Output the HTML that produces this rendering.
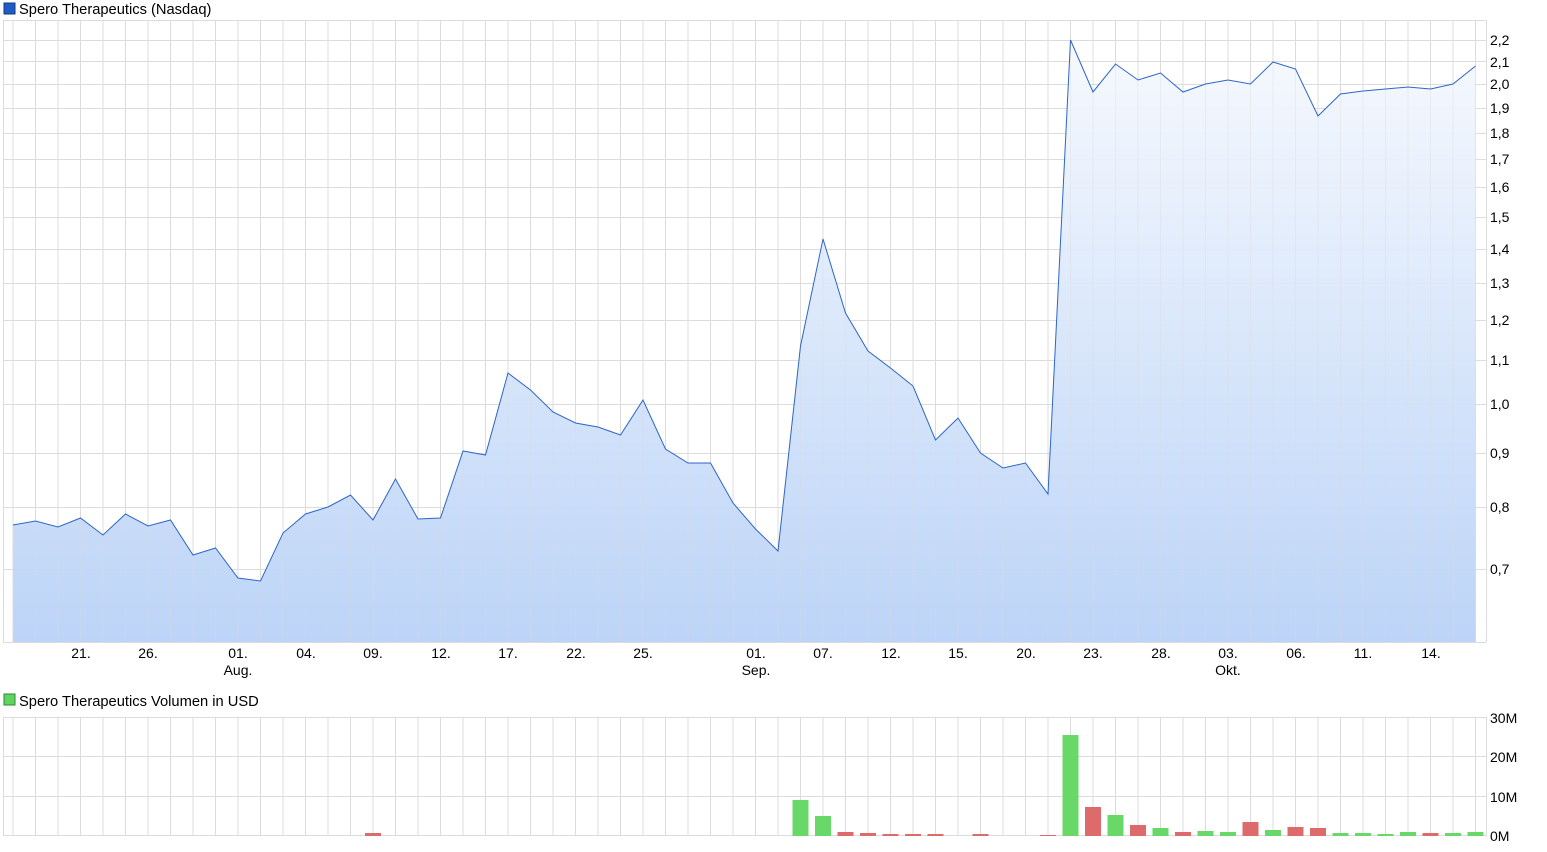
<!DOCTYPE html>
<html><head><meta charset="utf-8"><style>
body{margin:0;background:#fff;width:1547px;height:852px;overflow:hidden;font-family:"Liberation Sans",sans-serif}
svg{display:block}
text{font-family:"Liberation Sans",sans-serif;font-size:14px;fill:#000}
text.lg{font-size:14.7px}
</style></head><body>
<svg width="1547" height="852" viewBox="0 0 1547 852">
<defs>
<pattern id="vg" patternUnits="userSpaceOnUse" x="12.5" y="0" width="22.5" height="852"><rect x="0" y="0" width="1" height="852" fill="#dcdcdc"/></pattern>
<linearGradient id="fg" x1="0" y1="0" x2="0" y2="1"><stop offset="0" stop-color="#f6f9fe"/><stop offset="1" stop-color="#b9d2f7"/></linearGradient>
</defs>
<rect x="3" y="20" width="1483" height="622" fill="url(#vg)"/>
<g fill="#dcdcdc">
<rect x="3" y="20" width="1483" height="1"/><rect x="3" y="40" width="1483" height="1"/><rect x="3" y="61" width="1483" height="1"/><rect x="3" y="84" width="1483" height="1"/><rect x="3" y="108" width="1483" height="1"/><rect x="3" y="133" width="1483" height="1"/><rect x="3" y="159" width="1483" height="1"/><rect x="3" y="187" width="1483" height="1"/><rect x="3" y="217" width="1483" height="1"/><rect x="3" y="249" width="1483" height="1"/><rect x="3" y="283" width="1483" height="1"/><rect x="3" y="320" width="1483" height="1"/><rect x="3" y="360" width="1483" height="1"/><rect x="3" y="404" width="1483" height="1"/><rect x="3" y="453" width="1483" height="1"/><rect x="3" y="507" width="1483" height="1"/><rect x="3" y="569" width="1483" height="1"/><rect x="3" y="642" width="1483" height="1"/>
<rect x="3" y="20" width="1" height="622"/><rect x="1486" y="20" width="1" height="622"/>
</g>
<polygon fill="url(#fg)" fill-opacity="0.95" points="13,642 13,525 35.5,521 58,527 80.5,518 103,535 125.5,514 148,526 170.5,520 193,555 215.5,548 238,578 260.5,581 283,533 305.5,514 328,507 350.5,495 373,520 395.5,479 418,519 440.5,518 463,451 485.5,455 508,373 530.5,390 553,412 575.5,423 598,427 620.5,435 643,400 665.5,449 688,463 710.5,463 733,503 755.5,529 778,551 800.5,346 823,239 845.5,313 868,351 890.5,368 913,386 935.5,440 958,418 980.5,453 1003,468 1025.5,463 1048,494 1070.5,40 1093,92 1115.5,64 1138,80 1160.5,73 1183,92 1205.5,84 1228,80 1250.5,84 1273,62 1295.5,69 1318,116 1340.5,94 1363,91 1385.5,89 1408,87 1430.5,89 1453,84 1475.5,66 1475.5,642"/>
<rect x="3" y="20" width="1483" height="622" fill="url(#vg)" opacity="0.35"/>
<polyline fill="none" stroke="#2d65c8" stroke-width="1" points="13,525 35.5,521 58,527 80.5,518 103,535 125.5,514 148,526 170.5,520 193,555 215.5,548 238,578 260.5,581 283,533 305.5,514 328,507 350.5,495 373,520 395.5,479 418,519 440.5,518 463,451 485.5,455 508,373 530.5,390 553,412 575.5,423 598,427 620.5,435 643,400 665.5,449 688,463 710.5,463 733,503 755.5,529 778,551 800.5,346 823,239 845.5,313 868,351 890.5,368 913,386 935.5,440 958,418 980.5,453 1003,468 1025.5,463 1048,494 1070.5,40 1093,92 1115.5,64 1138,80 1160.5,73 1183,92 1205.5,84 1228,80 1250.5,84 1273,62 1295.5,69 1318,116 1340.5,94 1363,91 1385.5,89 1408,87 1430.5,89 1453,84 1475.5,66"/>
<rect x="4" y="3" width="11" height="11" fill="#1f5bc6" stroke="#123a80" stroke-width="1"/>
<text class="lg" x="19" y="14">Spero Therapeutics (Nasdaq)</text>
<g>
<text x="1490" y="45">2,2</text><text x="1490" y="67">2,1</text><text x="1490" y="89">2,0</text><text x="1490" y="113">1,9</text><text x="1490" y="138">1,8</text><text x="1490" y="164">1,7</text><text x="1490" y="192">1,6</text><text x="1490" y="222">1,5</text><text x="1490" y="254">1,4</text><text x="1490" y="288">1,3</text><text x="1490" y="325">1,2</text><text x="1490" y="365">1,1</text><text x="1490" y="409">1,0</text><text x="1490" y="458">0,9</text><text x="1490" y="512">0,8</text><text x="1490" y="574">0,7</text>
</g>
<g text-anchor="middle">
<text x="81" y="658">21.</text><text x="148" y="658">26.</text><text x="238" y="658">01.</text><text x="238" y="675">Aug.</text><text x="306" y="658">04.</text><text x="373" y="658">09.</text><text x="441" y="658">12.</text><text x="508" y="658">17.</text><text x="576" y="658">22.</text><text x="643" y="658">25.</text><text x="756" y="658">01.</text><text x="756" y="675">Sep.</text><text x="823" y="658">07.</text><text x="891" y="658">12.</text><text x="958" y="658">15.</text><text x="1026" y="658">20.</text><text x="1093" y="658">23.</text><text x="1161" y="658">28.</text><text x="1228" y="658">03.</text><text x="1228" y="675">Okt.</text><text x="1296" y="658">06.</text><text x="1363" y="658">11.</text><text x="1431" y="658">14.</text>
</g>
<rect x="4" y="694" width="11" height="11" fill="#5fd35f" stroke="#2e8a2e" stroke-width="1"/>
<text class="lg" x="19" y="706">Spero Therapeutics Volumen in USD</text>
<rect x="3" y="717" width="1483" height="119" fill="url(#vg)"/>
<g fill="#dcdcdc">
<rect x="3" y="717" width="1483" height="1"/><rect x="3" y="756" width="1483" height="1"/><rect x="3" y="796" width="1483" height="1"/><rect x="3" y="835" width="1483" height="1"/>
<rect x="3" y="717" width="1" height="119"/><rect x="1486" y="717" width="1" height="119"/>
</g>
<g fill="#68d968">
<rect x="792.5" y="800" width="16" height="36"/><rect x="815" y="816" width="16" height="20"/><rect x="1062.5" y="735" width="16" height="101"/><rect x="1107.5" y="815" width="16" height="21"/><rect x="1152.5" y="828" width="16" height="8"/><rect x="1197.5" y="831" width="16" height="5"/><rect x="1220" y="832" width="16" height="4"/><rect x="1265" y="830" width="16" height="6"/><rect x="1332.5" y="833" width="16" height="3"/><rect x="1355" y="833" width="16" height="3"/><rect x="1377.5" y="834" width="16" height="2"/><rect x="1400" y="832" width="16" height="4"/><rect x="1445" y="833" width="16" height="3"/><rect x="1467.5" y="832" width="16" height="4"/>
</g>
<g fill="#dd6b6b">
<rect x="365" y="833" width="16" height="3"/><rect x="837.5" y="832" width="16" height="4"/><rect x="860" y="833" width="16" height="3"/><rect x="882.5" y="834" width="16" height="2"/><rect x="905" y="834" width="16" height="2"/><rect x="927.5" y="834" width="16" height="2"/><rect x="972.5" y="834" width="16" height="2"/><rect x="1040" y="835" width="16" height="1"/><rect x="1085" y="807" width="16" height="29"/><rect x="1130" y="825" width="16" height="11"/><rect x="1175" y="832" width="16" height="4"/><rect x="1242.5" y="822" width="16" height="14"/><rect x="1287.5" y="827" width="16" height="9"/><rect x="1310" y="828" width="16" height="8"/><rect x="1422.5" y="833" width="16" height="3"/>
</g>
<text x="1490" y="723">30M</text><text x="1490" y="762">20M</text><text x="1490" y="802">10M</text><text x="1490" y="841">0M</text>
</svg>
</body></html>
